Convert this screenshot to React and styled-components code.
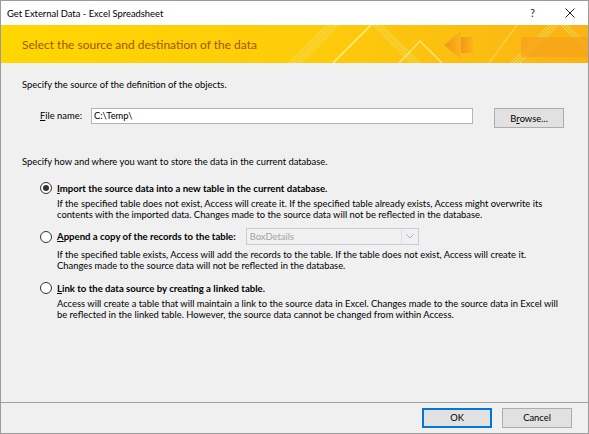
import React from 'react';
import styled, { createGlobalStyle } from 'styled-components';

const Global = createGlobalStyle`
  html, body {
    margin: 0;
    padding: 0;
    background: #ffffff;
  }
  body {
    font-family: Lato, "Noto Sans", sans-serif;
    font-size: 9.4px;
    color: #000000;
  }
`;

const Window = styled.div`
  box-sizing: border-box;
  width: 589px;
  height: 434px;
  display: flex;
  flex-direction: column;
  border: 1px solid #9b9b9b;
  background: #f0f0f0;
`;

const TitleBar = styled.div`
  box-sizing: border-box;
  height: 24px;
  display: flex;
  align-items: center;
  padding: 0 0 0 6px;
  background: #ffffff;
`;

const Title = styled.div`
  flex: 1;
  font-size: 9.4px;
`;

const TitleButton = styled.div`
  width: 37px;
  height: 24px;
  display: flex;
  align-items: center;
  justify-content: center;
  font-size: 10.5px;
  color: #222;
`;

const Banner = styled.div`
  display: grid;
  height: 38px;
  overflow: hidden;
  & > * {
    grid-area: 1 / 1;
  }
`;

const BannerText = styled.div`
  align-self: center;
  padding-left: 21px;
  font-size: 12px;
  color: #a35400;
  z-index: 1;
`;

const Body = styled.div`
  flex: 1;
  padding: 16px 21px 0;
`;

const Line = styled.div`
  line-height: 12px;
  margin-top: ${p => p.$mt || 0}px;
`;

const FileRow = styled.div`
  display: flex;
  align-items: flex-start;
  margin-top: 17px;
  padding-left: 18px;
`;

const FieldLabel = styled.div`
  width: 51px;
  line-height: 16px;
`;

const Key = styled.span`
  text-decoration: underline;
  text-underline-offset: 1px;
`;

const TextInput = styled.div`
  box-sizing: border-box;
  width: 382px;
  height: 16px;
  border: 1px solid #b5b5b5;
  background: #ffffff;
  padding-left: 2px;
  line-height: 14px;
`;

const Button = styled.div`
  box-sizing: border-box;
  width: ${p => p.$w || 70}px;
  height: 20px;
  display: flex;
  align-items: center;
  justify-content: center;
  background: #e1e1e1;
  border: ${p => (p.$primary ? '2px solid #0078d7' : '1px solid #adadad')};
  margin-left: ${p => p.$ml || 0}px;
`;

const Option = styled.div`
  padding-left: 18px;
  margin-top: ${p => p.$mt || 0}px;
`;

const OptionRow = styled.div`
  display: flex;
  align-items: center;
  height: ${p => p.$h || 12}px;
`;

const Radio = styled.div`
  box-sizing: border-box;
  width: 12px;
  height: 12px;
  border-radius: 50%;
  border: 1px solid #333333;
  background: #ffffff;
  display: flex;
  align-items: center;
  justify-content: center;
  margin-right: 5px;
  &::after {
    content: '';
    width: 6px;
    height: 6px;
    border-radius: 50%;
    background: ${p => (p.$checked ? '#333333' : 'transparent')};
  }
`;

const OptionLabel = styled.div`
  font-weight: 700;
  font-size: 9.6px;
`;

const Desc = styled.div`
  padding-left: 17px;
  margin-top: 4px;
  line-height: 11px;
  white-space: nowrap;
`;

const Select = styled.div`
  box-sizing: border-box;
  width: 173px;
  height: 17px;
  margin-left: 10px;
  display: flex;
  border: 1px solid #c5cfdb;
  background: #f0f0f0;
  color: #a3a3a3;
`;

const SelectValue = styled.div`
  flex: 1;
  padding-left: 3px;
  line-height: 15px;
`;

const SelectArrow = styled.div`
  width: 16px;
  border-left: 1px solid #dde3ea;
  display: flex;
  align-items: center;
  justify-content: center;
`;

const Footer = styled.div`
  box-sizing: border-box;
  height: 31px;
  border-top: 1px solid #a0a0a0;
  display: flex;
  align-items: center;
  justify-content: flex-end;
  padding: 0 16px 1px 0;
`;

const BannerArt = () => (
  <svg width="587" height="38" viewBox="0 0 587 38" preserveAspectRatio="none">
    <defs>
      <linearGradient id="bg" x1="0" y1="0" x2="1" y2="0">
        <stop offset="0" stopColor="#fed700" />
        <stop offset="0.55" stopColor="#fdcb0b" />
        <stop offset="1" stopColor="#fab316" />
      </linearGradient>
      <linearGradient id="arrow" x1="0" y1="0" x2="1" y2="0">
        <stop offset="0" stopColor="#f49618" />
        <stop offset="1" stopColor="#f9b519" />
      </linearGradient>
    </defs>
    <rect width="587" height="38" fill="url(#bg)" />
    <g stroke="#ffe46a" strokeWidth="1" opacity="0.8">
      {[0, 3, 6, 9, 12].map(o => (
        <line key={'a' + o} x1={288 + o} y1="38" x2={326 + o} y2="0" />
      ))}
      {[0, 3, 6, 9].map(o => (
        <line key={'b' + o} x1={372 + o} y1="0" x2={410 + o} y2="38" />
      ))}
      {[0, 3, 6, 9].map(o => (
        <line key={'c' + o} x1={510 + o} y1="38" x2={548 + o} y2="0" />
      ))}
      {[0, 3, 6].map(o => (
        <line key={'d' + o} x1={560 + o} y1="0" x2={598 + o} y2="38" />
      ))}
    </g>
    <line x1="332" y1="38" x2="370" y2="0" stroke="#fff08a" strokeWidth="1.5" />
    <polyline points="398,38 419,16 441,38" fill="none" stroke="#ffe98a" strokeWidth="1.2" />
    <polygon points="443,20 460,6 460,34" fill="url(#arrow)" />
    <rect x="460" y="12" width="12" height="16" fill="url(#arrow)" />
    <rect x="520" y="12" width="67" height="20" fill="#f5a11a" opacity="0.75" />
    <line x1="488" y1="38" x2="516" y2="0" stroke="#ffd54a" strokeWidth="1.2" />
  </svg>
);

const Chevron = () => (
  <svg width="8" height="5" viewBox="0 0 8 5">
    <polyline points="0.5,0.5 4,4 7.5,0.5" fill="none" stroke="#b0b0b0" strokeWidth="1" />
  </svg>
);

const CloseIcon = () => (
  <svg width="10" height="10" viewBox="0 0 10 10">
    <path d="M0.5 0.5 L9.5 9.5 M9.5 0.5 L0.5 9.5" stroke="#222" strokeWidth="1" />
  </svg>
);

export default function App() {
  return (
    <>
      <Global />
      <Window>
        <TitleBar>
          <Title>Get External Data - Excel Spreadsheet</Title>
          <TitleButton>?</TitleButton>
          <TitleButton>
            <CloseIcon />
          </TitleButton>
        </TitleBar>

        <Banner>
          <BannerArt />
          <BannerText>Select the source and destination of the data</BannerText>
        </Banner>

        <Body>
          <Line>Specify the source of the definition of the objects.</Line>

          <FileRow>
            <FieldLabel>
              <Key>F</Key>ile name:
            </FieldLabel>
            <TextInput>C:\Temp\</TextInput>
            <Button $ml={21}>
              B<Key>r</Key>owse...
            </Button>
          </FileRow>

          <Line $mt={28}>Specify how and where you want to store the data in the current database.</Line>

          <Option $mt={14}>
            <OptionRow>
              <Radio $checked />
              <OptionLabel>
                <Key>I</Key>mport the source data into a new table in the current database.
              </OptionLabel>
            </OptionRow>
            <Desc>
              If the specified table does not exist, Access will create it. If the specified table already exists, Access might overwrite its
              <br />
              contents with the imported data. Changes made to the source data will not be reflected in the database.
            </Desc>
          </Option>

          <Option $mt={8}>
            <OptionRow $h={17}>
              <Radio />
              <OptionLabel>
                <Key>A</Key>ppend a copy of the records to the table:
              </OptionLabel>
              <Select>
                <SelectValue>BoxDetails</SelectValue>
                <SelectArrow>
                  <Chevron />
                </SelectArrow>
              </Select>
            </OptionRow>
            <Desc>
              If the specified table exists, Access will add the records to the table. If the table does not exist, Access will create it.
              <br />
              Changes made to the source data will not be reflected in the database.
            </Desc>
          </Option>

          <Option $mt={11}>
            <OptionRow>
              <Radio />
              <OptionLabel>
                <Key>L</Key>ink to the data source by creating a linked table.
              </OptionLabel>
            </OptionRow>
            <Desc>
              Access will create a table that will maintain a link to the source data in Excel. Changes made to the source data in Excel will
              <br />
              be reflected in the linked table. However, the source data cannot be changed from within Access.
            </Desc>
          </Option>
        </Body>

        <Footer>
          <Button $primary>OK</Button>
          <Button $ml={10}>Cancel</Button>
        </Footer>
      </Window>
    </>
  );
}
